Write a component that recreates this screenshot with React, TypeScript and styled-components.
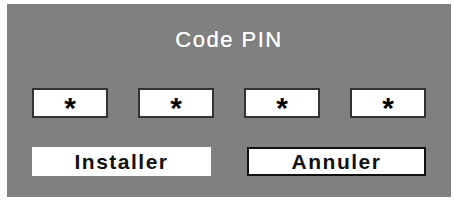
import styled, { createGlobalStyle } from 'styled-components';

const GlobalStyle = createGlobalStyle`
    body {
        margin: 0;
        background: #ffffff;
        font-family: "Liberation Sans", Arial, sans-serif;
    }
`

const pins = ['*', '*', '*', '*'];

function App(){
    return(
        <>
            <GlobalStyle />
            <Panel>
                <Title>Code PIN</Title>
                <PinRow>
                    {pins.map((p, i) => (
                        <PinBox key={i}>{p}</PinBox>
                    ))}
                </PinRow>
                <ButtonRow>
                    <Button>Installer</Button>
                    <Button bordered>Annuler</Button>
                </ButtonRow>
            </Panel>
        </>
    )
}

const Panel = styled.div`
    box-sizing: border-box;
    width: 444px;
    height: 193px;
    margin: 4px 0 0 7px;
    padding: 23px 25px 0 25px;
    background: #808080;
    display: flex;
    flex-direction: column;
`

const Title = styled.div`
    color: #ffffff;
    font-size: 22px;
    line-height: 26px;
    letter-spacing: 1.5px;
    text-align: center;
    text-shadow: 0 0 0.4px #ffffff;
`

const PinRow = styled.div`
    display: flex;
    justify-content: space-between;
    margin-top: 35px;
`

const PinBox = styled.div`
    box-sizing: border-box;
    width: 76px;
    height: 30px;
    padding-top: 10px;
    background: #ffffff;
    border: 2px solid #333333;
    font-size: 30px;
    font-weight: bold;
    line-height: 16px;
    text-align: center;
    color: #000000;
`

const ButtonRow = styled.div`
    display: flex;
    justify-content: space-between;
    margin-top: 29px;
`

const Button = styled.div<{ bordered?: boolean }>`
    box-sizing: border-box;
    width: 179px;
    height: 29px;
    background: #ffffff;
    border: 2px solid ${p => p.bordered ? '#111111' : '#ffffff'};
    display: flex;
    align-items: center;
    justify-content: center;
    font-size: 21px;
    font-weight: bold;
    letter-spacing: 1.5px;
    color: #111111;
`

export default App;
